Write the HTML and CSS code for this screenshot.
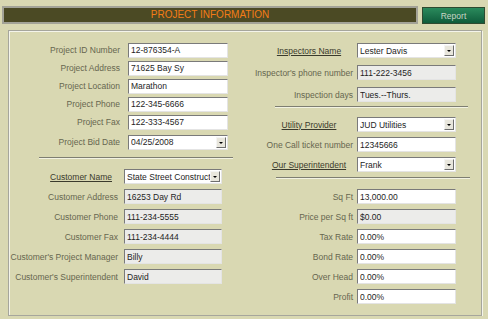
FILE: index.html
```html
<!DOCTYPE html>
<html lang="en">
<head>
    <meta charset="UTF-8">
    <title>Project Information</title>
    <link rel="stylesheet" href="styles.css">
</head>
<body>
    <div class="topbar">
        <div class="title-bar">PROJECT INFORMATION</div>
        <button class="report-btn">Report</button>
    </div>

    <div class="panel">
        <div class="col col-left">
            <div class="group project">
                <div class="row"><label>Project ID Number</label><input class="box" value="12-876354-A"></div>
                <div class="row"><label>Project Address</label><input class="box" value="71625 Bay Sy"></div>
                <div class="row"><label>Project Location</label><input class="box" value="Marathon"></div>
                <div class="row"><label>Project Phone</label><input class="box" value="122-345-6666"></div>
                <div class="row"><label>Project Fax</label><input class="box" value="122-333-4567"></div>
                <div class="row bid-row"><label>Project Bid Date</label>
                    <div class="box combo"><span class="combo-text">04/25/2008</span><span class="drop-btn"></span></div>
                </div>
            </div>

            <div class="divider divider-left"></div>

            <div class="group customer">
                <div class="row name-row"><label class="link left-link">Customer Name</label>
                    <div class="box combo"><span class="combo-text">State Street Construction</span><span class="drop-btn"></span></div>
                </div>
                <div class="row first-row"><label>Customer Address</label><input class="box readonly" value="16253 Day Rd"></div>
                <div class="row"><label>Customer Phone</label><input class="box readonly" value="111-234-5555"></div>
                <div class="row"><label>Customer Fax</label><input class="box readonly" value="111-234-4444"></div>
                <div class="row"><label>Customer's Project Manager</label><input class="box readonly" value="Billy"></div>
                <div class="row"><label>Customer's Superintendent</label><input class="box readonly" value="David"></div>
            </div>
        </div>

        <div class="col col-right">
            <div class="group inspector">
                <div class="row"><label class="link">Inspectors Name</label>
                    <div class="box combo"><span class="combo-text">Lester Davis</span><span class="drop-btn"></span></div>
                </div>
                <div class="row"><label>Inspector's phone number</label><input class="box readonly" value="111-222-3456"></div>
                <div class="row"><label>Inspection days</label><input class="box readonly" value="Tues.--Thurs."></div>
            </div>

            <div class="divider divider-r1"></div>

            <div class="group utility">
                <div class="row"><label class="link">Utility Provider</label>
                    <div class="box combo"><span class="combo-text">JUD Utilities</span><span class="drop-btn"></span></div>
                </div>
                <div class="row"><label>One Call ticket number</label><input class="box" value="12345666"></div>
                <div class="row"><label class="link">Our Superintendent</label>
                    <div class="box combo"><span class="combo-text">Frank</span><span class="drop-btn"></span></div>
                </div>
            </div>

            <div class="divider divider-r2"></div>

            <div class="group costs">
                <div class="row"><label>Sq Ft</label><input class="box" value="13,000.00"></div>
                <div class="row"><label>Price per Sq ft</label><input class="box readonly" value="$0.00"></div>
                <div class="row"><label>Tax Rate</label><input class="box" value="0.00%"></div>
                <div class="row"><label>Bond Rate</label><input class="box" value="0.00%"></div>
                <div class="row"><label>Over Head</label><input class="box" value="0.00%"></div>
                <div class="row"><label>Profit</label><input class="box" value="0.00%"></div>
            </div>
        </div>
    </div>
</body>
</html>
```

FILE: styles.css
```css
body {
    margin: 0;
    background-color: #d9d8b2;
    font-family: "Liberation Sans", Arial, sans-serif;
    font-size: 8.5px;
    color: #66664f;
}
.topbar {
    display: flex;
    align-items: flex-start;
    gap: 4px;
    padding: 6px 0 0 2px;
}
.title-bar {
    width: 416px;
    height: 18px;
    box-sizing: border-box;
    border: 2px solid #a3a397;
    background-color: #4b4a24;
    color: #f47c16;
    font-size: 10px;
    line-height: 14px;
    text-align: center;
}
.report-btn {
    margin-top: 1px;
    width: 63px;
    height: 17px;
    box-sizing: border-box;
    border: 1px solid #2e4a30;
    background: linear-gradient(#2a8a5c, #0f5c3b);
    color: #c9d6c6;
    font-family: inherit;
    font-size: 8.5px;
    padding: 0;
}
.panel {
    display: flex;
    margin: 6px 0 0 8px;
    width: 474px;
    height: 286px;
    box-sizing: border-box;
    border: 1px solid #a6a69c;
    box-shadow: inset 1px 1px 0 #f4f4ea, 1px 1px 0 #f4f4ea;
}
.col-left {
    width: 240px;
}
.col-right {
    flex: 1;
}
.group {
    display: flex;
    flex-direction: column;
}
.row {
    display: grid;
    align-items: center;
    height: 15px;
}
.row label {
    text-align: right;
    white-space: nowrap;
}
.project {
    gap: 2px;
    padding-top: 11px;
}
.project .row {
    height: 16px;
    grid-template-columns: 111px 100px;
    column-gap: 8px;
}
.project .bid-row {
    margin-top: 2px;
}
.customer {
    gap: 5px;
    padding-top: 10px;
}
.customer .row {
    grid-template-columns: 109px 98px;
    column-gap: 6px;
}
.customer .name-row {
    height: 14px;
}
.customer .first-row {
    margin-top: 1px;
}
.col-right .row {
    grid-template-columns: 104px 99px;
    column-gap: 4px;
}
.inspector {
    gap: 7px;
    padding-top: 12px;
}
.utility {
    gap: 5px;
    padding-top: 9px;
}
.costs {
    gap: 5px;
    padding-top: 10px;
}
.link {
    color: #3a3a2c;
    text-decoration: underline;
}
.col-right .link {
    text-align: center;
    padding-left: 16px;
}
.left-link {
    padding-right: 6px;
}
.divider {
    height: 0;
    border-top: 1px solid #7e7e72;
    border-bottom: 1px solid #f2f2e2;
}
.divider-left {
    margin: 7px 0 0 30px;
    width: 194px;
}
.divider-r1 {
    margin: 4px 0 0 26px;
    width: 193px;
}
.divider-r2 {
    margin: 5px 0 0 27px;
    width: 194px;
}
.box {
    height: 15px;
    box-sizing: border-box;
    margin: 0;
    padding: 0 2px;
    border: 1px solid;
    border-color: #7a7a7a #e4e4e4 #e4e4e4 #7a7a7a;
    background-color: #fff;
    font-family: inherit;
    font-size: 8.5px;
    color: #1e1e1e;
    outline: none;
}
.box.readonly {
    background-color: #ececea;
}
.combo {
    display: flex;
    align-items: center;
    overflow: hidden;
    padding-right: 1px;
}
.combo-text {
    flex: 1;
    overflow: hidden;
    white-space: nowrap;
}
.drop-btn {
    position: relative;
    flex: none;
    width: 10px;
    height: 11px;
    box-sizing: border-box;
    border: 1px solid;
    border-color: #f4f4f4 #6e6e6e #6e6e6e #f4f4f4;
    background-color: #e8e6dc;
}
.drop-btn::after {
    content: "";
    position: absolute;
    left: 2px;
    top: 4px;
    border-left: 2px solid transparent;
    border-right: 2px solid transparent;
    border-top: 2px solid #000;
}
```
